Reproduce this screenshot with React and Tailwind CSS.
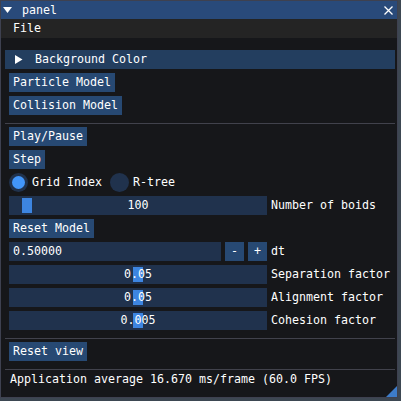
const font = { fontFamily: '"DejaVu Sans Mono", "Liberation Mono", monospace' };

function Button({ label, className = "" }) {
  return (
    <div
      className={
        "h-[19px] px-[4px] flex items-center bg-[#274973] text-white whitespace-pre self-start " +
        className
      }
    >
      {label}
    </div>
  );
}

function Slider({ value, label, grabLeft }) {
  return (
    <div className="flex items-center h-[19px]">
      <div className="relative w-[258px] h-[19px] bg-[#20324d]">
        <div
          className="absolute top-[2px] w-[10px] h-[15px] bg-[#3d85e0]"
          style={{ left: grabLeft }}
        />
        <div className="relative h-full flex items-center justify-center text-white">
          {value}
        </div>
      </div>
      <span className="ml-[4px] text-white whitespace-pre">{label}</span>
    </div>
  );
}

function Radio({ label, checked }) {
  return (
    <div className="flex items-center">
      <div className="w-[19px] h-[19px] rounded-full bg-[#20324d] flex items-center justify-center">
        {checked && <div className="w-[13px] h-[13px] rounded-full bg-[#4296fa]" />}
      </div>
      <span className="ml-[4px] text-white whitespace-pre">{label}</span>
    </div>
  );
}

function Separator({ className = "" }) {
  return <div className={"w-[390px] h-px bg-[#41424c] " + className} />;
}

export default function App() {
  return (
    <div
      className="w-[401px] h-[401px] bg-[#3d4752] text-[11.63px] leading-[13px]"
      style={font}
    >
      <div className="relative w-[398px] h-[398px] border border-[#3e4150] bg-[#16171a] flex flex-col">
        {/* title bar */}
        <div className="h-[18px] bg-[#294a7a] flex items-center text-white">
          <svg width="10" height="8" viewBox="0 0 10 8" className="ml-[2px]">
            <polygon points="0,1 9,1 4.5,7" fill="#fff" />
          </svg>
          <span className="ml-[9px]">panel</span>
          <svg width="9" height="9" viewBox="0 0 9 9" className="ml-auto mr-[4px]">
            <path d="M0.5 0.5 L8.5 8.5 M8.5 0.5 L0.5 8.5" stroke="#fff" strokeWidth="1.3" />
          </svg>
        </div>
        {/* menu bar */}
        <div className="h-[19px] bg-[#242424] flex items-center text-white">
          <span className="ml-[12px]">File</span>
        </div>

        {/* content */}
        <div className="flex flex-col pt-[12px] pl-[4px]">
          <div className="w-[390px] h-[19px] bg-[#233e5f] flex items-center text-white">
            <svg width="8" height="9" viewBox="0 0 8 9" className="ml-[10px]">
              <polygon points="0,0 7.5,4.5 0,9" fill="#fff" />
            </svg>
            <span className="ml-[12px]">Background Color</span>
          </div>

          <div className="flex flex-col pl-[4px]">
            <Button label="Particle Model" className="mt-[4px]" />
            <Button label="Collision Model" className="mt-[4px]" />
          </div>

          <Separator className="mt-[8px]" />

          <div className="flex flex-col pl-[4px] mt-[3px] gap-[4px]">
            <Button label="Play/Pause" />
            <Button label="Step" />
            <div className="flex items-center h-[19px] gap-[8px]">
              <Radio label="Grid Index" checked />
              <Radio label="R-tree" />
            </div>
            <Slider value="100" label="Number of boids" grabLeft={13} />
            <Button label="Reset Model" />
            <div className="flex items-center h-[19px]">
              <div className="w-[212px] h-[19px] bg-[#20324d] flex items-center pl-[4px] text-white">
                0.50000
              </div>
              <div className="ml-[4px] w-[19px] h-[19px] bg-[#274973] flex items-center justify-center text-white">
                -
              </div>
              <div className="ml-[4px] w-[19px] h-[19px] bg-[#274973] flex items-center justify-center text-white">
                +
              </div>
              <span className="ml-[4px] text-white">dt</span>
            </div>
            <Slider value="0.05" label="Separation factor" grabLeft={124} />
            <Slider value="0.05" label="Alignment factor" grabLeft={124} />
            <Slider value="0.005" label="Cohesion factor" grabLeft={124} />
          </div>

          <Separator className="mt-[8px]" />

          <div className="flex flex-col pl-[4px] mt-[3px]">
            <Button label="Reset view" />
          </div>

          <Separator className="mt-[8px]" />

          <div className="pl-[5px] mt-[3px] text-white whitespace-pre">
            Application average 16.670 ms/frame (60.0 FPS)
          </div>
        </div>

        {/* resize grip */}
        <svg width="11" height="11" viewBox="0 0 11 11" className="absolute right-0 bottom-0">
          <polygon points="11,0 11,11 0,11" fill="#3d7cc9" />
        </svg>
      </div>
    </div>
  );
}
